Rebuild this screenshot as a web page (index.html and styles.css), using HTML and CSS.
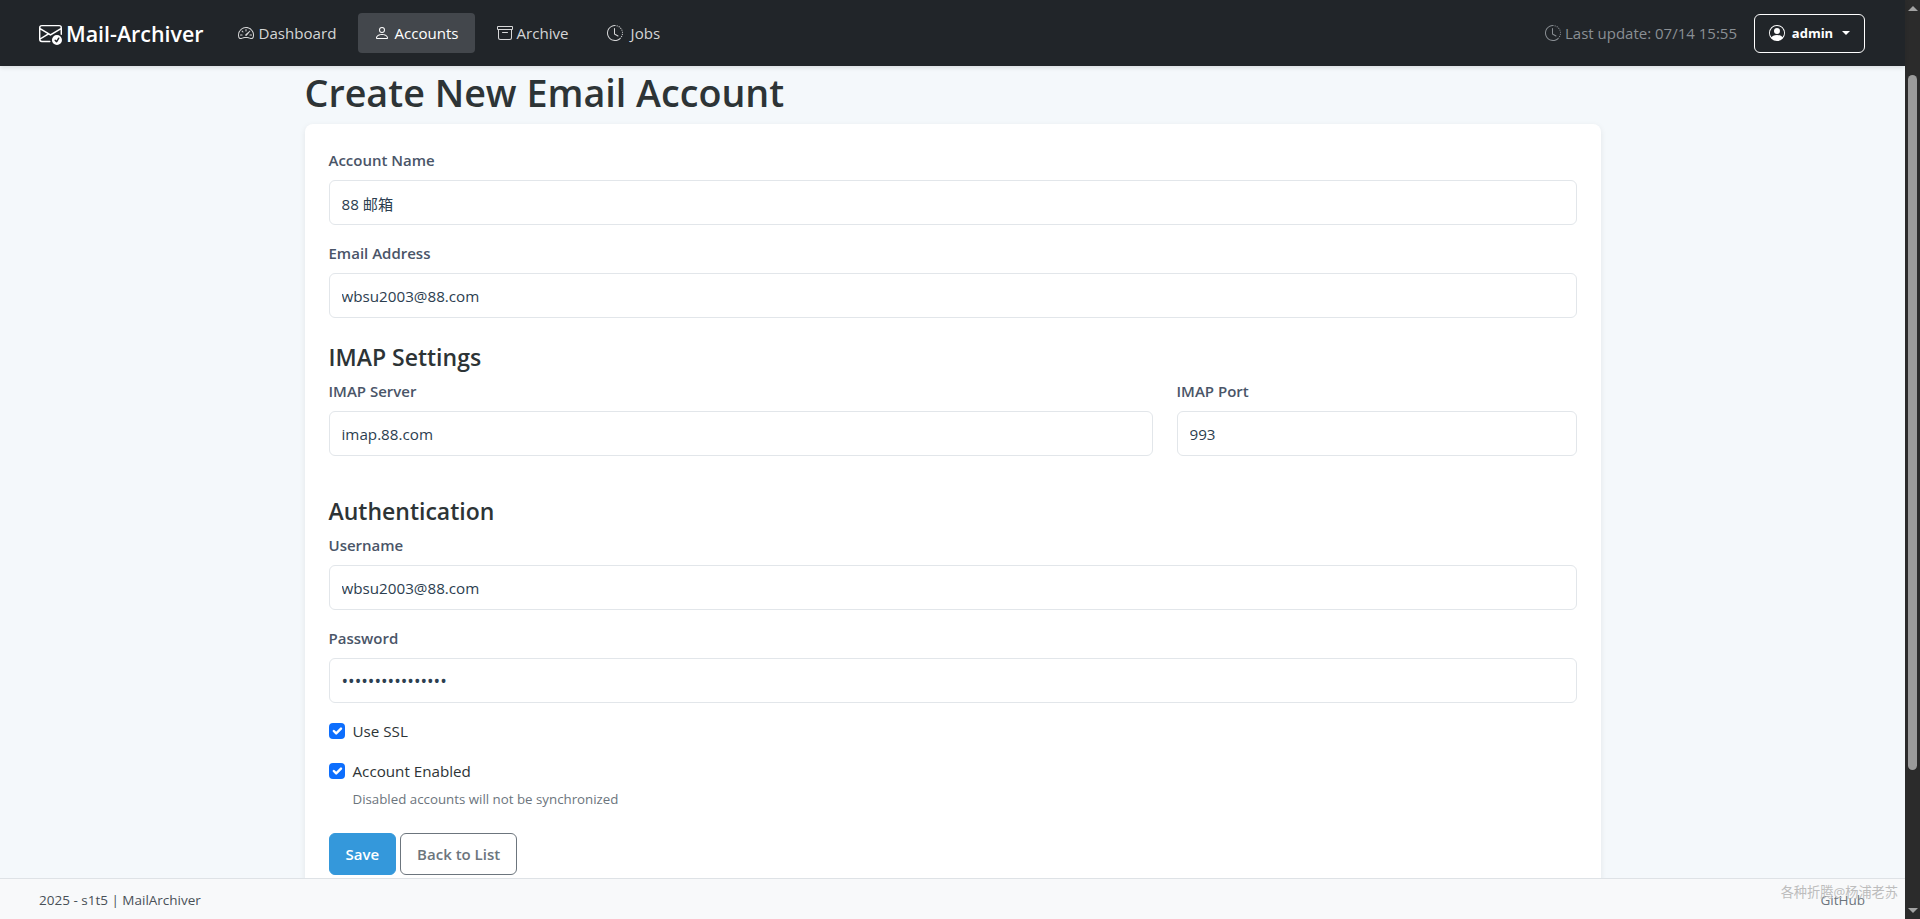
FILE: index.html
```html
<!DOCTYPE html>
<html lang="en">
<head>
<meta charset="utf-8">
<title>Create New Email Account - Mail-Archiver</title>
<link rel="stylesheet" href="styles.css">
</head>
<body>
<div class="app">
  <nav class="navbar">
    <a class="brand" href="#">
      <svg class="brand-icon" viewBox="0 0 16 16" fill="currentColor"><path d="M2 2a2 2 0 0 0-2 2v8.01A2 2 0 0 0 2 14h5.5a.5.5 0 0 0 0-1H2a1 1 0 0 1-.966-.741l5.64-3.471L8 9.583l7-4.2V8.5a.5.5 0 0 0 1 0V4a2 2 0 0 0-2-2H2Zm3.708 6.208L1 11.105V5.383l4.708 2.825ZM1 4.217V4a1 1 0 0 1 1-1h12a1 1 0 0 1 1 1v.217l-7 4.2-7-4.2Z"/><path d="M16 12.5a3.5 3.5 0 1 1-7 0 3.5 3.5 0 0 1 7 0Zm-1.993-1.679a.5.5 0 0 0-.686.172l-1.17 1.95-.547-.547a.5.5 0 0 0-.708.708l.774.773a.75.75 0 0 0 1.174-.144l1.335-2.226a.5.5 0 0 0-.172-.686Z"/></svg>
      <span>Mail-Archiver</span>
    </a>
    <ul class="nav">
      <li><a class="nav-link" href="#"><svg class="icon" viewBox="0 0 16 16" fill="currentColor"><path d="M8 4a.5.5 0 0 1 .5.5V6a.5.5 0 0 1-1 0V4.5A.5.5 0 0 1 8 4zM3.732 5.732a.5.5 0 0 1 .707 0l.915.914a.5.5 0 1 1-.708.708l-.914-.915a.5.5 0 0 1 0-.707zM2 10a.5.5 0 0 1 .5-.5h1.586a.5.5 0 0 1 0 1H2.5A.5.5 0 0 1 2 10zm9.5 0a.5.5 0 0 1 .5-.5h1.5a.5.5 0 0 1 0 1H12a.5.5 0 0 1-.5-.5zm.754-4.246a.389.389 0 0 0-.527-.02L7.547 9.31a.91.91 0 1 0 1.302 1.258l3.434-4.297a.389.389 0 0 0-.029-.518z"/><path d="M0 10a8 8 0 1 1 15.547 2.661c-.442 1.253-1.845 1.602-2.932 1.25C11.309 13.488 9.475 13 8 13c-1.474 0-3.31.488-4.615.911-1.087.352-2.49.003-2.932-1.25A7.988 7.988 0 0 1 0 10zm8-7a7 7 0 0 0-6.603 9.329c.203.575.923.876 1.68.63C4.397 12.533 6.358 12 8 12s3.604.532 4.923.96c.757.245 1.477-.056 1.68-.631A7 7 0 0 0 8 3z"/></svg>Dashboard</a></li>
      <li><a class="nav-link active" href="#"><svg class="icon" viewBox="0 0 16 16" fill="currentColor"><path d="M8 8a3 3 0 1 0 0-6 3 3 0 0 0 0 6Zm2-3a2 2 0 1 1-4 0 2 2 0 0 1 4 0Zm4 8c0 1-1 1-1 1H3s-1 0-1-1 1-4 6-4 6 3 6 4Zm-1-.004c-.001-.246-.154-.986-.832-1.664C11.516 10.68 10.289 10 8 10c-2.29 0-3.516.68-4.168 1.332-.678.678-.83 1.418-.832 1.664h10Z"/></svg>Accounts</a></li>
      <li><a class="nav-link" href="#"><svg class="icon" viewBox="0 0 16 16" fill="currentColor"><path d="M0 2a1 1 0 0 1 1-1h14a1 1 0 0 1 1 1v2a1 1 0 0 1-1 1v7.5a2.5 2.5 0 0 1-2.5 2.5h-9A2.5 2.5 0 0 1 1 12.5V5a1 1 0 0 1-1-1V2zm2 3v7.5A1.5 1.5 0 0 0 3.5 14h9a1.5 1.5 0 0 0 1.5-1.5V5H2zm13-3H1v2h14V2zM5 7.5a.5.5 0 0 1 .5-.5h5a.5.5 0 0 1 0 1h-5a.5.5 0 0 1-.5-.5z"/></svg>Archive</a></li>
      <li><a class="nav-link jobs" href="#"><svg class="icon" viewBox="0 0 16 16" fill="currentColor"><path d="M8.515 1.019A7 7 0 0 0 8 1V0a8 8 0 0 1 .589.022l-.074.997zm2.004.45a7.003 7.003 0 0 0-.985-.299l.219-.976c.383.086.76.2 1.126.342l-.36.933zm1.37.71a7.01 7.01 0 0 0-.439-.27l.493-.87a8.025 8.025 0 0 1 .979.654l-.615.789a6.996 6.996 0 0 0-.418-.302zm1.834 1.79a6.99 6.99 0 0 0-.653-.796l.724-.69c.27.285.52.59.747.91l-.818.576zm.744 1.352a7.08 7.08 0 0 0-.214-.468l.893-.45a7.976 7.976 0 0 1 .45 1.088l-.95.313a7.023 7.023 0 0 0-.179-.483zm.53 2.507a6.991 6.991 0 0 0-.1-1.025l.985-.17c.067.386.106.778.116 1.17l-1 .025zm-.131 1.538c.033-.17.06-.339.081-.51l.993.123a7.957 7.957 0 0 1-.23 1.155l-.964-.267c.046-.165.086-.332.12-.501zm-.952 2.379c.184-.29.346-.594.486-.908l.914.405c-.16.36-.345.706-.555 1.038l-.845-.535zm-.964 1.205c.122-.122.239-.248.35-.378l.758.653a8.073 8.073 0 0 1-.401.432l-.707-.707z"/><path d="M8 1a7 7 0 1 0 4.95 11.95l.707.707A8.001 8.001 0 1 1 8 0v1z"/><path d="M7.5 3a.5.5 0 0 1 .5.5v5.21l3.248 1.856a.5.5 0 0 1-.496.868l-3.5-2A.5.5 0 0 1 7 9V3.5a.5.5 0 0 1 .5-.5z"/></svg>Jobs</a></li>
    </ul>
    <div class="nav-right">
      <span class="last-update"><svg class="icon" viewBox="0 0 16 16" fill="currentColor"><path d="M8.515 1.019A7 7 0 0 0 8 1V0a8 8 0 0 1 .589.022l-.074.997zm2.004.45a7.003 7.003 0 0 0-.985-.299l.219-.976c.383.086.76.2 1.126.342l-.36.933zm1.37.71a7.01 7.01 0 0 0-.439-.27l.493-.87a8.025 8.025 0 0 1 .979.654l-.615.789a6.996 6.996 0 0 0-.418-.302zm1.834 1.79a6.99 6.99 0 0 0-.653-.796l.724-.69c.27.285.52.59.747.91l-.818.576zm.744 1.352a7.08 7.08 0 0 0-.214-.468l.893-.45a7.976 7.976 0 0 1 .45 1.088l-.95.313a7.023 7.023 0 0 0-.179-.483zm.53 2.507a6.991 6.991 0 0 0-.1-1.025l.985-.17c.067.386.106.778.116 1.17l-1 .025zm-.131 1.538c.033-.17.06-.339.081-.51l.993.123a7.957 7.957 0 0 1-.23 1.155l-.964-.267c.046-.165.086-.332.12-.501zm-.952 2.379c.184-.29.346-.594.486-.908l.914.405c-.16.36-.345.706-.555 1.038l-.845-.535zm-.964 1.205c.122-.122.239-.248.35-.378l.758.653a8.073 8.073 0 0 1-.401.432l-.707-.707z"/><path d="M8 1a7 7 0 1 0 4.95 11.95l.707.707A8.001 8.001 0 1 1 8 0v1z"/><path d="M7.5 3a.5.5 0 0 1 .5.5v5.21l3.248 1.856a.5.5 0 0 1-.496.868l-3.5-2A.5.5 0 0 1 7 9V3.5a.5.5 0 0 1 .5-.5z"/></svg>Last update: 07/14 15:55</span>
      <button class="user-btn" type="button"><svg class="icon" viewBox="0 0 16 16" fill="currentColor"><path d="M11 6a3 3 0 1 1-6 0 3 3 0 0 1 6 0z"/><path d="M0 8a8 8 0 1 1 16 0A8 8 0 0 1 0 8zm8-7a7 7 0 0 0-5.468 11.37C3.242 11.226 4.805 10 8 10s4.757 1.225 5.468 2.37A7 7 0 0 0 8 1z"/></svg><span>admin</span><i class="caret"></i></button>
    </div>
  </nav>

  <main class="content">
    <div class="container">
      <h1>Create New Email Account</h1>
      <form class="card">
        <div class="field">
          <label for="name">Account Name</label>
          <input id="name" type="text" value="88 邮箱">
        </div>
        <div class="field">
          <label for="email">Email Address</label>
          <input id="email" type="text" value="wbsu2003@88.com">
        </div>
        <h4>IMAP Settings</h4>
        <div class="row">
          <div class="field">
            <label for="server">IMAP Server</label>
            <input id="server" type="text" value="imap.88.com">
          </div>
          <div class="field">
            <label for="port">IMAP Port</label>
            <input id="port" type="text" value="993">
          </div>
        </div>
        <h4 class="auth">Authentication</h4>
        <div class="field">
          <label for="user">Username</label>
          <input id="user" type="text" value="wbsu2003@88.com">
        </div>
        <div class="field">
          <label for="pass">Password</label>
          <input id="pass" class="secret" type="password" value="aaaaaaaaaaaaaaaa">
        </div>
        <div class="check">
          <input id="ssl" type="checkbox" checked>
          <label for="ssl">Use SSL</label>
        </div>
        <div class="check enabled">
          <input id="enabled" type="checkbox" checked>
          <label for="enabled">Account Enabled</label>
          <small>Disabled accounts will not be synchronized</small>
        </div>
        <div class="actions">
          <button class="btn btn-save" type="button">Save</button>
          <button class="btn btn-back" type="button">Back to List</button>
        </div>
      </form>
    </div>
  </main>

  <footer class="footer">
    <span>2025 - s1t5 | MailArchiver</span>
    <a href="#">GitHub</a>
    <span class="watermark">各种折腾@杨浦老苏</span>
  </footer>
</div>
<div class="scrollbar" aria-hidden="true">
  <i class="arrow up"></i>
  <div class="track"><div class="thumb"></div></div>
  <i class="arrow down"></i>
</div>
</body>
</html>
```

FILE: styles.css
```css
* { box-sizing: border-box; }
html, body { height: 100%; margin: 0; }
body {
  display: flex;
  overflow: hidden;
  background: #f4f8fb;
  color: #2d3436;
  font-family: "Open Sans", "Noto Sans CJK SC", sans-serif;
  font-size: 14px;
}
a { text-decoration: none; color: inherit; }

.app { flex: 1; min-width: 0; display: flex; flex-direction: column; height: 100%; }

.navbar {
  flex: none;
  height: 66px;
  display: flex;
  align-items: center;
  padding: 0 40px 0 39px;
  background: #212529;
  box-shadow: 0 2px 4px rgba(0,0,0,.1);
  position: relative;
  z-index: 2;
}
.brand { display: flex; align-items: center; gap: 4px; color: #fff; font-size: 21.4px; font-weight: 600; margin-right: 19px; }
.brand-icon { width: 23px; height: 23px; }
.nav { display: flex; list-style: none; margin: 0; padding: 0; gap: 6px; }
.nav-link {
  display: flex;
  align-items: center;
  gap: 4px;
  height: 40px;
  padding: 0 16px;
  border-radius: 4px;
  color: rgba(255,255,255,.82);
  font-size: 15.1px;
}
.nav-link.active { background: #43474c; color: #fff; }
.nav-link.jobs { gap: 8px; }
.icon { width: 16px; height: 16px; flex: none; }
.nav-right { margin-left: auto; display: flex; align-items: center; gap: 17px; }
.last-update { display: flex; align-items: center; gap: 4px; color: #8a8f94; font-size: 15px; }
.user-btn {
  display: flex;
  align-items: center;
  gap: 7px;
  height: 39px;
  width: 111px;
  justify-content: center;
  background: none;
  border: 1px solid #fff;
  border-radius: 6px;
  color: #fff;
  font: 700 13px "Open Sans", sans-serif;
}
.caret { width: 0; height: 0; border: 4px solid transparent; border-top-color: #fff; border-bottom: 0; margin-left: 2px; }

.content { flex: 1; min-height: 0; overflow: hidden; }
.container { width: 1320px; margin: 0 auto; padding: 0 12px; }
h1 { margin: 0 0 6px; padding-top: 2px; font-size: 37.7px; line-height: 50px; font-weight: 600; color: #2d3436; }

.card {
  background: #fff;
  border-radius: 8px;
  box-shadow: 0 2px 6px rgba(0,0,0,.08);
  padding: 24px;
  height: 900px;
}
.field { margin-bottom: 16px; }
label { display: block; }
.field label { margin-bottom: 8px; line-height: 24px; color: #4a5568; font-size: 15px; font-weight: 600; }
.field input {
  display: block;
  width: 100%;
  height: 45px;
  padding: 0 12px;
  border: 1px solid #e2e6ea;
  border-radius: 6px;
  background: #fff;
  color: #2c3e50;
  font: 15.2px "Open Sans", "Noto Sans CJK SC", sans-serif;
  outline: 0;
}
.field input.secret { font-size: 17.5px; }
h4 { margin: 25px 0 7px; line-height: 29px; font-size: 23px; font-weight: 600; color: #2d3436; }
h4.auth { margin-top: 25px; }
.row { display: grid; grid-template-columns: 824px 400px; gap: 24px; }

.check { display: grid; grid-template-columns: 16px 1fr; column-gap: 8px; align-items: center; margin-bottom: 16px; font-size: 15.2px; line-height: 24px; }
.check input {
  appearance: none;
  margin: 0;
  width: 16px;
  height: 16px;
  border-radius: 4px;
  background: #0d6efd url("data:image/svg+xml,%3csvg xmlns='http://www.w3.org/2000/svg' viewBox='0 0 20 20'%3e%3cpath fill='none' stroke='%23fff' stroke-linecap='round' stroke-linejoin='round' stroke-width='3' d='m6 10 3 3 6-6'/%3e%3c/svg%3e") center/100% no-repeat;
}
.check small { grid-column: 2; color: #6c757d; font-size: 13.3px; line-height: 20px; margin-top: 6px; }
.check.enabled { margin-bottom: 24px; }

.actions { display: flex; gap: 4px; }
.btn {
  height: 42px;
  padding: 0 16px;
  border-radius: 6px;
  font: 600 15px "Open Sans", sans-serif;
}
.btn-save { background: #3498db; border: 1px solid #3498db; color: #fff; }
.btn-back { background: #fff; border: 1px solid #6c757d; color: #6c757d; }

.footer {
  flex: none;
  position: relative;
  z-index: 2;
  height: 41px;
  display: flex;
  align-items: center;
  justify-content: space-between;
  padding: 1px 40px 0 39px;
  background: #f8f9fa;
  border-top: 1px solid #dee2e6;
  color: #495057;
  font-size: 13.5px;
}
.footer a { color: #6c757d; }
.watermark { position: absolute; right: 7px; top: 3px; color: #bdbdbd; font-size: 13.2px; }

.scrollbar { flex: none; width: 15px; height: 100%; display: flex; flex-direction: column; background: #2b2b2b; }
.arrow { flex: none; height: 17px; display: flex; align-items: center; justify-content: center; }
.arrow::before { content: ""; border: 5px solid transparent; }
.arrow.up::before { border-top: 0; border-bottom: 5px solid #a3a3a3; }
.arrow.down::before { border-bottom: 0; border-top: 5px solid #a3a3a3; }
.track { flex: 1; padding-top: 58px; }
.thumb { width: 9px; height: 695px; margin: 0 3px; background: #9b9b9b; border-radius: 5px; }
```
